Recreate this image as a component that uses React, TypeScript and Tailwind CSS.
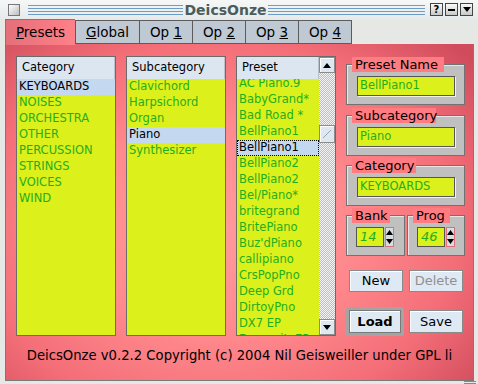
import React from "react";

const categories = ["KEYBOARDS", "NOISES", "ORCHESTRA", "OTHER", "PERCUSSION", "STRINGS", "VOICES", "WIND"];
const subcategories = ["Clavichord", "Harpsichord", "Organ", "Piano", "Synthesizer"];
const presets = [
  "AC Piano.9",
  "BabyGrand*",
  "Bad Road *",
  "BellPiano1",
  "BellPiano1",
  "BellPiano2",
  "BellPiano2",
  "Bel/Piano*",
  "britegrand",
  "BritePiano",
  "Buz'dPiano",
  "callipiano",
  "CrsPopPno",
  "Deep Grd",
  "DirtoyPno",
  "DX7 EP",
  "DynomiteEP",
];

function ListBox({ title, items, selected }: { title: string; items: string[]; selected: number }) {
  return (
    <div className="w-[100px] h-[280px] border border-[#6b6b6b] bg-[#dcf01c] flex flex-col overflow-hidden">
      <div className="h-[22px] shrink-0 bg-[#dbe6f1] border-r border-[#b9c2cc] pl-[5px] flex items-center text-[11.5px] text-black">
        {title}
      </div>
      {items.map((it, i) => (
        <div
          key={i}
          className={
            i === selected
              ? "h-[16px] shrink-0 pl-[2px] flex items-center text-[11.5px] bg-[#c4d8ef] text-black"
              : "h-[16px] shrink-0 pl-[2px] flex items-center text-[11.5px] text-[#1fae1f]"
          }
        >
          {it}
        </div>
      ))}
    </div>
  );
}

function PresetList() {
  return (
    <div className="w-[100px] h-[280px] border border-[#6b6b6b] flex">
      <div className="w-[82px] flex flex-col bg-[#dcf01c] overflow-hidden relative">
        <div className="h-[22px] shrink-0 bg-[#dbe6f1] border-r border-[#b9c2cc] pl-[5px] flex items-center text-[11.5px] text-black relative z-10">
          Preset
        </div>
        <div className="flex flex-col -mt-[3px]">
          {presets.map((it, i) => (
            <div
              key={i}
              className={
                i === 4
                  ? "h-[16px] shrink-0 pl-[1px] flex items-center text-[11.5px] bg-[#c4d8ef] text-black border border-dotted border-black"
                  : "h-[16px] shrink-0 pl-[2px] flex items-center text-[11.5px] text-[#1fae1f]"
              }
            >
              {it}
            </div>
          ))}
        </div>
      </div>
      <div className="w-[16px] flex flex-col bg-[repeating-conic-gradient(#bdbdbd_0%_25%,#f4f4f4_0%_50%)] bg-[length:2px_2px]">
        <div className="h-[16px] shrink-0 bg-[#dde8f2] border border-[#8c8c8c] shadow-[inset_1px_1px_0_#ffffff] flex items-center justify-center">
          <svg width="8" height="5" viewBox="0 0 8 5"><path d="M4 0 L8 5 L0 5 Z" fill="#000" /></svg>
        </div>
        <div className="h-[52px] shrink-0" />
        <div className="h-[18px] shrink-0 bg-[#dde8f2] border border-[#8c8c8c] shadow-[inset_1px_1px_0_#ffffff] flex items-center justify-center">
          <svg width="10" height="10" viewBox="0 0 10 10"><path d="M1 9 L9 1" stroke="#9aa6b2" strokeWidth="1" /></svg>
        </div>
        <div className="flex-1" />
        <div className="h-[16px] shrink-0 bg-[#dde8f2] border border-[#8c8c8c] shadow-[inset_1px_1px_0_#ffffff] flex items-center justify-center">
          <svg width="8" height="5" viewBox="0 0 8 5"><path d="M0 0 L8 0 L4 5 Z" fill="#000" /></svg>
        </div>
      </div>
    </div>
  );
}

function Group({ title, value, titleW }: { title: string; value: string; titleW: string }) {
  return (
    <div className="relative w-[119px] h-[41px] bg-[#c0c0c0] border border-[#727272] shadow-[inset_1px_1px_0_#e6e6e6] pl-[10px] pt-[11px]">
      <span className={"absolute left-[5px] -top-[8px] h-[15px] bg-[#ff7c82] pl-[3px] text-[13px] leading-[15px] text-black " + titleW}>
        {title}
      </span>
      <div className="w-[98px] h-[20px] bg-[#dcf01c] border border-[#555555] shadow-[1px_1px_0_#f2f2f2] pl-[2px] flex items-center text-[11.5px] text-[#1fae1f]">
        {value}
      </div>
    </div>
  );
}

function Spin({ title, value, w, titleW }: { title: string; value: string; w: string; titleW: string }) {
  return (
    <div className={"relative h-[41px] bg-[#c0c0c0] border border-[#727272] shadow-[inset_1px_1px_0_#e6e6e6] pl-[9px] pt-[11px] flex " + w}>
      <span className={"absolute left-[5px] -top-[8px] h-[15px] bg-[#ff7c82] pl-[3px] text-[13px] leading-[15px] text-black " + titleW}>
        {title}
      </span>
      <div className="w-[28px] h-[20px] bg-[#dcf01c] border border-[#555555] pl-[3px] flex items-center text-[13px] italic text-[#1fae1f]">
        {value}
      </div>
      <div className="w-[9px] h-[20px] ml-px bg-[#d8dde2] border border-[#e07078] flex flex-col items-center justify-between py-[2px]">
        <svg width="7" height="5" viewBox="0 0 7 5"><path d="M3.5 0 L7 5 L0 5 Z" fill="#000" /></svg>
        <svg width="7" height="5" viewBox="0 0 7 5"><path d="M0 0 L7 0 L3.5 5 Z" fill="#000" /></svg>
      </div>
    </div>
  );
}

function TitleBtn({ children }: { children: React.ReactNode }) {
  return (
    <div className="w-[13px] h-[13px] border border-[#444] bg-[linear-gradient(#fafafa,#c8c8c8)] flex items-center justify-center text-[10px] font-bold leading-none text-black">
      {children}
    </div>
  );
}

export default function App() {
  return (
    <div className="w-[478px] h-[384px] bg-[#e6e8e6] flex flex-col overflow-hidden font-['DejaVu_Sans',sans-serif]">
      {/* title bar */}
      <div className="h-[19px] shrink-0 flex items-center bg-[linear-gradient(#f6f8f8,#e6eaea)]">
        <div className="ml-[8px] w-[12px] h-[12px] border border-[#777] bg-[linear-gradient(135deg,#ffffff,#bdbdbd)]" />
        <div className="ml-[8px] w-[155px] h-[10px] bg-[repeating-linear-gradient(to_bottom,#6e9cc4_0px,#6e9cc4_1px,transparent_1px,transparent_3px)]" />
        <div className="w-[85px] text-center text-[14px] font-bold text-[#4a5c5c] leading-none">DeicsOnze</div>
        <div className="w-[157px] h-[10px] bg-[repeating-linear-gradient(to_bottom,#6e9cc4_0px,#6e9cc4_1px,transparent_1px,transparent_3px)]" />
        <div className="ml-[5px] flex gap-[2px]">
          <TitleBtn>?</TitleBtn>
          <TitleBtn>
            <div className="w-[7px] h-[2px] bg-black" />
          </TitleBtn>
          <TitleBtn>
            <svg width="8" height="5" viewBox="0 0 8 5"><path d="M0 0 L8 0 L4 5 Z" fill="#000" /></svg>
          </TitleBtn>
        </div>
      </div>

      {/* tabs */}
      <div className="h-[25px] shrink-0 flex items-end pl-[5px] pr-[5px] relative z-10">
        <div className="w-[70px] h-[26px] -mb-px bg-[linear-gradient(90deg,#e4707a,#ff8088)] border-t border-l border-[#7a7a7a] flex items-center justify-center text-[13.5px] text-black">
          <span><span className="underline">P</span>resets</span>
        </div>
        <div className="w-[65px] h-[24px] bg-[#bfc9d3] border border-[#5c5c5c] flex items-center justify-center text-[13.5px] text-black">
          <span><span className="underline">G</span>lobal</span>
        </div>
        {["1", "2", "3", "4"].map((n) => (
          <div key={n} className="w-[53px] h-[24px] bg-[#bfc9d3] border border-l-0 border-[#5c5c5c] flex items-center justify-center text-[13.5px] text-black">
            <span>Op <span className="underline">{n}</span></span>
          </div>
        ))}
        <div className="flex-1 h-px bg-[#e8e8e8]" />
      </div>

      {/* panel */}
      <div className="mx-[5px] mr-[4px] h-[337px] shrink-0 border border-t-0 border-[#7a7a7a] flex flex-col bg-[radial-gradient(ellipse_72%_78%_at_45%_55%,#ff9a9c_0%,#ff8a8e_40%,#f46e78_72%,#d04c5c_100%)]">
        <div className="flex pl-[10px] pt-[12px]">
          <ListBox title="Category" items={categories} selected={0} />
          <div className="w-[10px]" />
          <ListBox title="Subcategory" items={subcategories} selected={3} />
          <div className="w-[10px]" />
          <PresetList />
          <div className="ml-[10px] pt-[8px] flex flex-col">
            <Group title="Preset Name" value="BellPiano1" titleW="w-[92px]" />
            <div className="h-[10px]" />
            <Group title="Subcategory" value="Piano" titleW="w-[84px]" />
            <div className="h-[9px]" />
            <Group title="Category" value="KEYBOARDS" titleW="w-[64px]" />
            <div className="h-[9px]" />
            <div className="flex gap-[2px]">
              <Spin title="Bank" value="14" w="w-[59px]" titleW="w-[38px]" />
              <Spin title="Prog" value="46" w="w-[58px]" titleW="w-[37px]" />
            </div>
            <div className="flex gap-[6px] pl-[3px] mt-[14px]">
              <div className="w-[54px] h-[22px] bg-[#dfe9f3] border border-[#8a8a8a] shadow-[inset_1px_1px_0_#ffffff] flex items-center justify-center text-[13px] text-black">
                New
              </div>
              <div className="w-[54px] h-[22px] bg-[#dfe9f3] border border-[#8a8a8a] shadow-[inset_1px_1px_0_#ffffff] flex items-center justify-center text-[13px] text-[#909090]">
                Delete
              </div>
            </div>
            <div className="flex gap-[5px] mt-[15px] items-center">
              <div className="w-[58px] h-[29px] rounded-[2px] border-[3px] border-[#a4a4a4] bg-[#7a7a7a] p-px">
                <div className="w-full h-full bg-[#dfe9f3] shadow-[inset_1px_1px_0_#ffffff] flex items-center justify-center text-[13px] font-bold text-black">
                  Load
                </div>
              </div>
              <div className="w-[54px] h-[23px] bg-[#dfe9f3] border border-[#8a8a8a] shadow-[inset_1px_1px_0_#ffffff] flex items-center justify-center text-[13px] text-black">
                Save
              </div>
            </div>
          </div>
        </div>
        <div className="flex-1 flex items-center justify-center pb-[4px] text-[13.2px] text-black">
          DeicsOnze v0.2.2 Copyright (c) 2004 Nil Geisweiller under GPL li
        </div>
      </div>
      <div className="flex-1 flex justify-end items-end pr-[2px] pb-px">
        <div className="w-[12px] h-[3px] border-t border-b border-[#888]" />
      </div>
    </div>
  );
}
